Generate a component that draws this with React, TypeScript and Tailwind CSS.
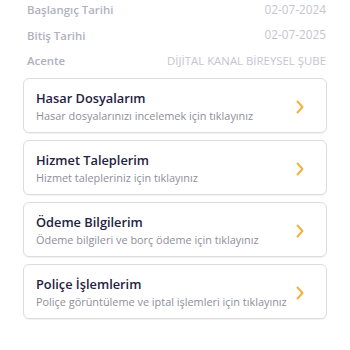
import React from "react";

const rows = [
  { label: "Başlangıç Tarihi", value: "02-07-2024", size: "text-[11.8px]" },
  { label: "Bitiş Tarihi", value: "02-07-2025", size: "text-[11.8px]" },
  { label: "Acente", value: "DİJİTAL KANAL BİREYSEL ŞUBE", size: "text-[11.4px]" },
];

const cards = [
  { title: "Hasar Dosyalarım", sub: "Hasar dosyalarınızı incelemek için tıklayınız" },
  { title: "Hizmet Taleplerim", sub: "Hizmet talepleriniz için tıklayınız" },
  { title: "Ödeme Bilgilerim", sub: "Ödeme bilgileri ve borç ödeme için tıklayınız" },
  { title: "Poliçe İşlemlerim", sub: "Poliçe görüntüleme ve iptal işlemleri için tıklayınız" },
];

function Chevron() {
  return (
    <svg width="8" height="14" viewBox="0 0 8 14" fill="none" className="shrink-0">
      <path d="M1.5 1.5 L6.5 7 L1.5 12.5" stroke="#f3b23f" strokeWidth="2" strokeLinecap="round" strokeLinejoin="round" />
    </svg>
  );
}

export default function App() {
  return (
    <div
      className="w-[350px] h-[350px] bg-white overflow-hidden"
      style={{ fontFamily: '"Open Sans", "Lato", sans-serif' }}
    >
      <div className="px-[23px]">
        <div className="mt-[-3px] flex flex-col">
          {rows.map((r) => (
            <div key={r.label} className="h-[25.5px] flex items-center justify-between pl-[4px] pr-[1px]">
              <span className="text-[11.4px] font-semibold text-[#afb1c1]">{r.label}</span>
              <span className={`${r.size} text-[#c5c5cf]`}>{r.value}</span>
            </div>
          ))}
        </div>
        <div className="mt-[4px] flex flex-col gap-[7px]">
          {cards.map((c) => (
            <div
              key={c.title}
              className="h-[55px] rounded-[6px] border border-[#dcdce1] shadow-[0_1px_1px_rgba(0,0,0,0.06)] flex items-center justify-between pl-[12px] pr-[22px] pt-[4px]"
            >
              <div className="flex flex-col whitespace-nowrap">
                <span className="text-[12.8px] leading-[17px] font-semibold text-[#1f2240]">{c.title}</span>
                <span className="text-[10.9px] leading-[18px] text-[#8e8e9b]">{c.sub}</span>
              </div>
              <Chevron />
            </div>
          ))}
        </div>
      </div>
    </div>
  );
}
